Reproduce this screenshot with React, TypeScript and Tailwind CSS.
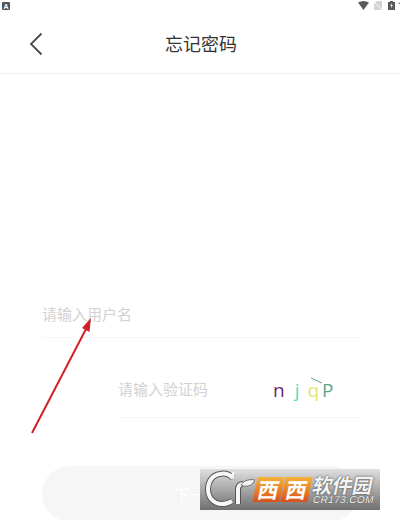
const cjk = "font-['Noto_Sans_CJK_SC','Noto_Sans',sans-serif]";

function StatusBar() {
  return (
    <div className="flex h-[24px] items-start justify-between pt-[1px] overflow-hidden">
      <div className="ml-[2px] mt-[1px] flex h-[8px] w-[8px] items-center justify-center rounded-[1px] bg-[#555]">
        <span className="font-['Liberation_Sans',sans-serif] text-[7px] leading-none font-bold text-white">A</span>
      </div>
      <div className="flex items-start">
        <svg width="11" height="9" viewBox="0 0 11 9" className="mr-[5px]">
          <path d="M0 1.5 Q5.5 -1.5 11 1.5 L5.5 9 Z" fill="#5a5a5a" />
        </svg>
        <svg width="8" height="9" viewBox="0 0 8 9" className="mr-[6px]">
          <path d="M3 0 H8 V9 H0 V3 Z" fill="#d4d4d4" />
          <path d="M0 1 L8 9" stroke="#f2f2f2" strokeWidth="1" />
        </svg>
        <svg width="7" height="9" viewBox="0 0 7 9" className="mr-[3px]">
          <path d="M2 0 H5 V1 H7 V9 H0 V1 H2 Z" fill="#5a5a5a" />
          <path d="M3.8 2 L2.4 5 H3.4 L3 7.4 L4.8 4 H3.7 Z" fill="#fff" />
        </svg>
        <span className="w-[2px] overflow-hidden font-['Roboto',sans-serif] text-[9px] leading-[10px] font-medium text-[#555]">1</span>
      </div>
    </div>
  );
}

function Header() {
  return (
    <div className="relative flex h-[50px] items-center justify-center border-b border-[#efefef]">
      <button className="absolute left-[29px] top-[8px]">
        <svg width="14" height="24" viewBox="0 0 14 24" fill="none" className="block">
          <path d="M12.5 1.5 L2 12 L12.5 22.5" stroke="#4a4a4a" strokeWidth="1.8" />
        </svg>
      </button>
      <h1 className={`${cjk} -mt-[12px] ml-[2px] text-[18px] leading-[26px] font-normal text-[#333]`}>忘记密码</h1>
    </div>
  );
}

function Captcha() {
  return (
    <div className="relative mt-[2px] flex w-[60px] items-baseline font-['Open_Sans',sans-serif] text-[19px] leading-[22px]">
      <span className="text-[#6d1f78]">n</span>
      <span className="ml-[10px] text-[#52e0b4]">j</span>
      <span className="ml-[8px] text-[#e8e27a]">q</span>
      <span className="ml-[3px] text-[#5fa58c]">P</span>
      <svg width="13" height="7" viewBox="0 0 13 7" className="absolute left-[37px] -top-[2px]">
        <path d="M1 1 L12 6" stroke="#5fa58c" strokeWidth="1" fill="none" />
      </svg>
    </div>
  );
}

function Watermark() {
  return (
    <div className="absolute left-[200px] top-[469px] flex h-[41px] w-[180px] items-center bg-gradient-to-b from-[#e0e0e0] via-[#a8a8a8] to-[#707070]">
      <svg width="55" height="41" viewBox="0 0 55 41" fill="none" className="shrink-0">
        <path d="M33 9 C29 5 24 4 20 5 C12 6 8 13 8 20 C8 29 14 35 22 35 C26 35 29 34 32 32" stroke="#555" strokeWidth="6" />
        <path d="M33 9 C29 5 24 4 20 5 C12 6 8 13 8 20 C8 29 14 35 22 35 C26 35 29 34 32 32" stroke="#f6f6f6" strokeWidth="4" />
        <path d="M33 3 V9" stroke="#f6f6f6" strokeWidth="2.5" />
        <path d="M38 35 V20 C38 17 40 15 43 15" stroke="#555" strokeWidth="6" />
        <path d="M38 35 V20 C38 17 40 15 43 15" stroke="#f6f6f6" strokeWidth="4" />
        <path d="M41 16 C44 11 50 10 55 11 C53 16 47 19 41 16 Z" fill="#f6f6f6" stroke="#555" strokeWidth="0.8" />
      </svg>
      <div className={`${cjk} flex gap-[1px]`}>
        <span className="flex h-[25px] w-[27px] -skew-x-12 items-center justify-center bg-gradient-to-b from-[#f6b23a] to-[#d94f1a] text-[21px] leading-none font-bold text-white">西</span>
        <span className="flex h-[25px] w-[27px] -skew-x-12 items-center justify-center bg-gradient-to-b from-[#f6b23a] to-[#d94f1a] text-[21px] leading-none font-bold text-white">西</span>
      </div>
      <div className="ml-[3px] flex flex-col items-center">
        <span className={`${cjk} -skew-x-12 text-[20px] leading-[20px] font-bold text-[#f4f4f4] [text-shadow:0_0_2px_#333]`}>软件园</span>
        <span className="-skew-x-12 font-['Liberation_Sans',sans-serif] text-[10px] leading-[10px] tracking-[0.4px] text-[#f4f4f4] [text-shadow:0_0_1px_#333]">CR173.COM</span>
      </div>
    </div>
  );
}

export default function App() {
  return (
    <main className="relative h-[520px] w-[400px] overflow-hidden bg-white">
      <StatusBar />
      <Header />
      <section className={`${cjk} flex flex-col pl-[42px] pr-[38px] pt-[228px]`}>
        <div className="h-[36px] border-b border-[#f6f6f6] text-[15px] leading-[24px] text-[#d2d2d2]">
          请输入用户名
        </div>
        <div className="ml-[77px] mt-[39px] flex h-[41px] items-start justify-between border-b border-[#f6f6f6] pr-[29px]">
          <span className="-ml-[1px] text-[15px] leading-[24px] text-[#d2d2d2]">请输入验证码</span>
          <Captcha />
        </div>
        <button className="mt-[48px] mr-[4px] h-[56px] rounded-[28px] bg-[#f6f6f6] pr-[4px] text-[16px] text-white">
          下一步
        </button>
      </section>
      <svg width="70" height="125" viewBox="0 0 70 125" fill="none" className="absolute left-[25px] top-[315px]">
        <path d="M7 118 L61 14" stroke="#d02028" strokeWidth="2" />
        <path d="M66 3 L57 13 L64.5 17 Z" fill="#d02028" />
      </svg>
      <Watermark />
    </main>
  );
}
